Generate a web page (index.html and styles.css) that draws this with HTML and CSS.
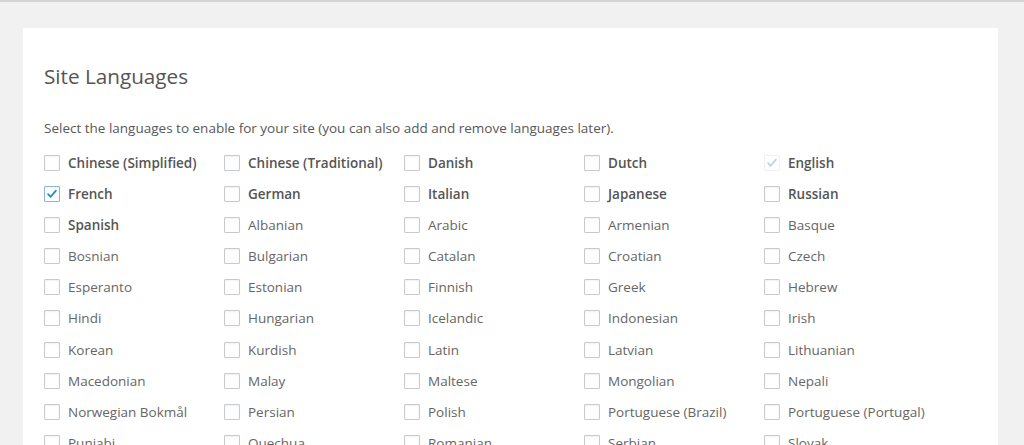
FILE: index.html
```html
<!DOCTYPE html>
<html lang="en">
<head>
<meta charset="utf-8">
<title>Site Languages</title>
<link rel="stylesheet" href="styles.css">
</head>
<body>
<div class="topline"></div>
<main class="card">
  <h2 class="title">Site Languages</h2>
  <p class="desc">Select the languages to enable for your site (you can also add and remove languages later).</p>
  <div class="grid">
    <label class="item bold"><span class="box"></span>Chinese (Simplified)</label>
    <label class="item bold"><span class="box"></span>Chinese (Traditional)</label>
    <label class="item bold"><span class="box"></span>Danish</label>
    <label class="item bold"><span class="box"></span>Dutch</label>
    <label class="item bold"><span class="box disabled"><svg viewBox="0 0 16 16"><path d="M3.5 8.2l3 3 6-7" /></svg></span>English</label>
    <label class="item bold"><span class="box checked"><svg viewBox="0 0 16 16"><path d="M3.5 8.2l3 3 6-7" /></svg></span>French</label>
    <label class="item bold"><span class="box"></span>German</label>
    <label class="item bold"><span class="box"></span>Italian</label>
    <label class="item bold"><span class="box"></span>Japanese</label>
    <label class="item bold"><span class="box"></span>Russian</label>
    <label class="item bold"><span class="box"></span>Spanish</label>
    <label class="item"><span class="box"></span>Albanian</label>
    <label class="item"><span class="box"></span>Arabic</label>
    <label class="item"><span class="box"></span>Armenian</label>
    <label class="item"><span class="box"></span>Basque</label>
    <label class="item"><span class="box"></span>Bosnian</label>
    <label class="item"><span class="box"></span>Bulgarian</label>
    <label class="item"><span class="box"></span>Catalan</label>
    <label class="item"><span class="box"></span>Croatian</label>
    <label class="item"><span class="box"></span>Czech</label>
    <label class="item"><span class="box"></span>Esperanto</label>
    <label class="item"><span class="box"></span>Estonian</label>
    <label class="item"><span class="box"></span>Finnish</label>
    <label class="item"><span class="box"></span>Greek</label>
    <label class="item"><span class="box"></span>Hebrew</label>
    <label class="item"><span class="box"></span>Hindi</label>
    <label class="item"><span class="box"></span>Hungarian</label>
    <label class="item"><span class="box"></span>Icelandic</label>
    <label class="item"><span class="box"></span>Indonesian</label>
    <label class="item"><span class="box"></span>Irish</label>
    <label class="item"><span class="box"></span>Korean</label>
    <label class="item"><span class="box"></span>Kurdish</label>
    <label class="item"><span class="box"></span>Latin</label>
    <label class="item"><span class="box"></span>Latvian</label>
    <label class="item"><span class="box"></span>Lithuanian</label>
    <label class="item"><span class="box"></span>Macedonian</label>
    <label class="item"><span class="box"></span>Malay</label>
    <label class="item"><span class="box"></span>Maltese</label>
    <label class="item"><span class="box"></span>Mongolian</label>
    <label class="item"><span class="box"></span>Nepali</label>
    <label class="item"><span class="box"></span>Norwegian Bokmål</label>
    <label class="item"><span class="box"></span>Persian</label>
    <label class="item"><span class="box"></span>Polish</label>
    <label class="item"><span class="box"></span>Portuguese (Brazil)</label>
    <label class="item"><span class="box"></span>Portuguese (Portugal)</label>
    <label class="item"><span class="box"></span>Punjabi</label>
    <label class="item"><span class="box"></span>Quechua</label>
    <label class="item"><span class="box"></span>Romanian</label>
    <label class="item"><span class="box"></span>Serbian</label>
    <label class="item"><span class="box"></span>Slovak</label>
  </div>
</main>
</body>
</html>
```

FILE: styles.css
```css
html, body {
  margin: 0;
  padding: 0;
  background: #f1f1f1;
  font-family: "Open Sans", "Liberation Sans", sans-serif;
  color: #5a5a5a;
  overflow: hidden;
  height: 445px;
}

.topline {
  height: 2px;
  background: #d4d4d4;
}

.card {
  margin: 26px 0 0 23px;
  width: 975px;
  background: #fff;
  padding: 34px 0 0 21px;
  box-sizing: border-box;
  min-height: 500px;
}

.title {
  margin: 0;
  font-size: 20.7px;
  font-weight: 400;
  line-height: 28px;
  color: #555;
}

.desc {
  margin: 29px 0 0;
  font-size: 13.5px;
  line-height: 18px;
  color: #585858;
}

.grid {
  margin-top: 17px;
  display: grid;
  grid-template-columns: repeat(5, 180px);
  grid-auto-rows: 31.1px;
}

.item {
  display: flex;
  align-items: center;
  gap: 8px;
  font-size: 13.5px;
  color: #666;
  height: 18px;
}

.item.bold {
  font-weight: 600;
  color: #555;
}

.box {
  width: 16px;
  height: 16px;
  box-sizing: border-box;
  border: 1px solid #c8cbce;
  border-radius: 1px;
  background: #fff;
  box-shadow: inset 0 1px 2px rgba(0,0,0,0.06);
  display: flex;
  flex: none;
}

.box svg {
  width: 14px;
  height: 14px;
}

.box path {
  fill: none;
  stroke-width: 2;
  stroke-linecap: round;
  stroke-linejoin: round;
}

.box.checked {
  border-color: #8fb6d3;
}

.box.checked path {
  stroke: #1e8cbe;
}

.box.disabled {
  border-color: #f0f0f0;
  box-shadow: none;
}

.box.disabled path {
  stroke: #b9d4e6;
}
```
